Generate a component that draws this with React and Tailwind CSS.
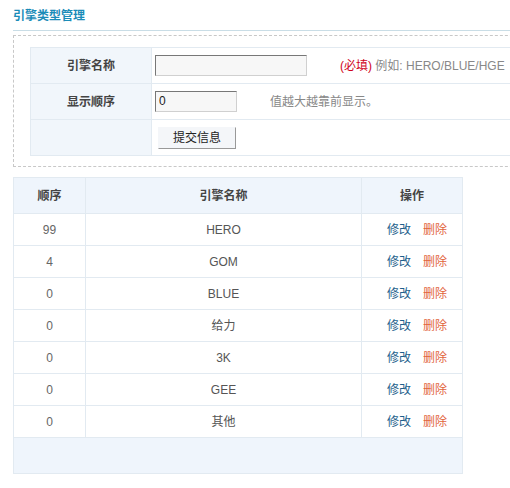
import React from "react";

const rows = [
  ["99", "HERO"],
  ["4", "GOM"],
  ["0", "BLUE"],
  ["0", "给力"],
  ["0", "3K"],
  ["0", "GEE"],
  ["0", "其他"],
];

export default function App() {
  return (
    <div
      className="w-[510px] h-[488px] overflow-hidden bg-white pl-[13px] pt-[9px] text-[12px] text-[#555]"
      style={{ fontFamily: '"Liberation Sans", Arial, "Noto Sans CJK SC", sans-serif' }}
    >
      <div className="h-[21px] leading-[14px] font-bold text-[#1b8cb8] text-[12px]">引擎类型管理</div>
      <div className="border-t border-[#c9dde6] w-[520px]"></div>
      <div className="mt-[4px] w-[520px] border border-dashed border-[#c8c8c8] pt-[11px] pl-[16px] pb-[10px]">
        <table className="border-collapse w-[500px]">
          <tbody>
            <tr className="h-[36px]">
              <td className="w-[121px] border border-[#e2eaf1] bg-[#f1f6fb] text-center font-bold text-[#444]">引擎名称</td>
              <td className="border border-[#e2eaf1] pl-[3px]">
                <div className="flex items-center">
                  <div className="w-[152px] h-[21px] border border-t-[#777] border-l-[#777] border-b-[#d0d0d0] border-r-[#d0d0d0] bg-[#f7f7f7]"></div>
                  <span className="ml-[33px] text-[#d0021b]">(必填)</span>
                  <span className="text-[#888]">&nbsp;例如: HERO/BLUE/HGE</span>
                </div>
              </td>
            </tr>
            <tr className="h-[36px]">
              <td className="border border-[#e2eaf1] bg-[#f1f6fb] text-center font-bold text-[#444]">显示顺序</td>
              <td className="border border-[#e2eaf1] pl-[3px]">
                <div className="flex items-center">
                  <div className="w-[82px] h-[21px] border border-t-[#777] border-l-[#777] border-b-[#d0d0d0] border-r-[#d0d0d0] bg-[#f7f7f7] pl-[3px] leading-[19px] text-[#222]">0</div>
                  <span className="ml-[33px] text-[#888]">值越大越靠前显示。</span>
                </div>
              </td>
            </tr>
            <tr className="h-[36px]">
              <td className="border border-[#e2eaf1] bg-[#f1f6fb]"></td>
              <td className="border border-[#e2eaf1] pl-[6px]">
                <button className="w-[78px] h-[22px] bg-[#f4f6f9] border border-t-[#f4f6f9] border-l-[#f4f6f9] border-b-[#999] border-r-[#999] text-[#222] text-[12px]">提交信息</button>
              </td>
            </tr>
          </tbody>
        </table>
      </div>
      <table className="mt-[10px] border-collapse w-[450px] text-center">
        <thead>
          <tr className="h-[36px] bg-[#eff5fc]">
            <th className="w-[72px] border border-[#e2eaf1] font-bold text-[#444]">顺序</th>
            <th className="w-[276px] border border-[#e2eaf1] font-bold text-[#444]">引擎名称</th>
            <th className="border border-[#e2eaf1] font-bold text-[#444]">操作</th>
          </tr>
        </thead>
        <tbody>
          {rows.map(([n, name], i) => (
            <tr key={i} className="h-[32px]">
              <td className="border border-[#e2eaf1] text-[#666]">{n}</td>
              <td className="border border-[#e2eaf1]">{name}</td>
              <td className="border border-[#e2eaf1] pl-[10px]">
                <span className="text-[#1e5f8c]">修改</span>
                <span className="ml-[12px] text-[#e2643c]">删除</span>
              </td>
            </tr>
          ))}
          <tr className="h-[36px] bg-[#eff5fc]">
            <td colSpan={3} className="border border-[#e2eaf1]"></td>
          </tr>
        </tbody>
      </table>
    </div>
  );
}
